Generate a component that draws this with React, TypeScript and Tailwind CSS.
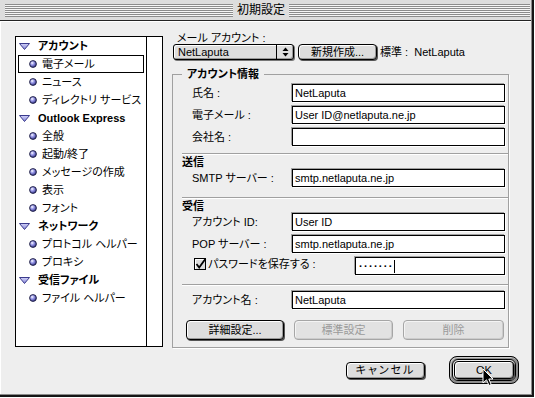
import React from "react";

const btn =
  "flex items-center justify-center rounded-[4px] border border-black bg-[#dddddd] shadow-[inset_1px_1px_0_#ffffff,inset_-1px_-1px_0_#999999,1px_1px_0_#555555]";
const btnDis =
  "flex items-center justify-center rounded-[4px] border border-[#a6a6a6] bg-[#e2e2e2] text-[#9a9a9a] shadow-[inset_1px_1px_0_#f4f4f4,inset_-1px_-1px_0_#cccccc]";
const input =
  "h-[18px] flex items-center border border-black bg-white pl-[2px] shadow-[-1px_-1px_0_#a0a0a0,1px_1px_0_#ffffff] whitespace-nowrap overflow-hidden";
const sep = "ml-[9px] h-[2px] border-t border-b border-t-[#a0a0a0] border-b-white";

function Tri() {
  return (
    <svg width="11" height="7" viewBox="0 0 11 7">
      <defs>
        <linearGradient id="tg" x1="0" y1="0" x2="0" y2="1">
          <stop offset="0" stopColor="#d4d4fa" />
          <stop offset="1" stopColor="#8484d4" />
        </linearGradient>
      </defs>
      <polygon points="0.5,0.5 10.5,0.5 5.5,6.5" fill="url(#tg)" stroke="#3a3a8c" strokeWidth="1" strokeLinejoin="round" />
    </svg>
  );
}

function Dot() {
  return (
    <svg width="8" height="8" viewBox="0 0 8 8">
      <defs>
        <radialGradient id="dg" cx="0.38" cy="0.35" r="0.7">
          <stop offset="0" stopColor="#ffffff" />
          <stop offset="0.35" stopColor="#a4a4ee" />
          <stop offset="1" stopColor="#2a2a86" />
        </radialGradient>
      </defs>
      <circle cx="4" cy="4" r="3.4" fill="url(#dg)" stroke="#1a1a3c" strokeWidth="0.9" />
    </svg>
  );
}

const items: { t: string; h?: boolean; sel?: boolean }[] = [
  { h: true, t: "アカウント" },
  { t: "電子メール", sel: true },
  { t: "ニュース" },
  { t: "ディレクトリ サービス" },
  { h: true, t: "Outlook Express" },
  { t: "全般" },
  { t: "起動/終了" },
  { t: "メッセージの作成" },
  { t: "表示" },
  { t: "フォント" },
  { h: true, t: "ネットワーク" },
  { t: "プロトコル ヘルパー" },
  { t: "プロキシ" },
  { h: true, t: "受信ファイル" },
  { t: "ファイル ヘルパー" },
];

function Stripes({ className }: { className: string }) {
  return (
    <div
      className={
        "h-[13px] bg-[image:repeating-linear-gradient(180deg,#8c8c8c_0px,#8c8c8c_1px,#f6f6f6_1px,#f6f6f6_2px)] " +
        className
      }
    />
  );
}

export default function App() {
  return (
    <div className="w-[535px] h-[398px] bg-white pr-[1px] pb-[1px] flex font-['Liberation_Sans','Noto_Sans_CJK_JP',sans-serif] text-[11px] text-black [font-feature-settings:'palt']">
      <div className="flex-1 flex border-r-2 border-b-2 border-[#151515]">
        <div className="flex-1 flex flex-col border-r border-b border-[#8a8a8a]">
          {/* title bar */}
          <div className="h-[21px] flex items-start pt-[4px] pl-[5px] pr-[1px] bg-[#dddddd] border-b border-[#222222]">
            <Stripes className="w-[228px]" />
            <div className="px-[4px] h-[13px] flex items-center text-[12px] leading-[13px]">初期設定</div>
            <Stripes className="flex-1" />
          </div>

          {/* content */}
          <div className="flex-1 flex items-start pl-[15px] pt-[11px] bg-[#eeeeee] shadow-[inset_1px_1px_0_#ffffff]">
            {/* list */}
            <div className="mt-[4px] w-[148px] h-[311px] border border-black bg-white flex">
              <div className="w-[130px] flex flex-col">
                {items.map((it, i) =>
                  it.h ? (
                    <div key={i} className="h-[18px] flex items-center pl-[3px] whitespace-nowrap">
                      <Tri />
                      <span className="ml-[8px] font-bold">{it.t}</span>
                    </div>
                  ) : (
                    <div
                      key={i}
                      className={
                        "h-[18px] mx-[2px] flex items-center pl-[10px] border whitespace-nowrap " +
                        (it.sel ? "border-black" : "border-transparent")
                      }
                    >
                      <Dot />
                      <span className="ml-[5px]">{it.t}</span>
                    </div>
                  )
                )}
              </div>
              <div className="flex-1 border-l border-black" />
            </div>

            {/* right column */}
            <div className="ml-[9px] w-[348px] flex flex-col">
              <div className="h-[12px] leading-[12px] pl-[5px] whitespace-nowrap">メール アカウント :</div>
              <div className="h-[16px] flex items-center">
                <div className="ml-[1px] w-[121px] h-[16px] flex items-stretch rounded-[3px] border border-black bg-[#dddddd] shadow-[inset_1px_1px_0_#ffffff,inset_-1px_-1px_0_#999999,1px_1px_0_#777777]">
                  <div className="flex-1 flex items-center pl-[4px]">NetLaputa</div>
                  <div className="w-[17px] border-l border-black flex items-center justify-center">
                    <svg width="7" height="10" viewBox="0 0 7 10">
                      <polygon points="3.5,0.5 6.5,4 0.5,4" fill="#000" />
                      <polygon points="0.5,6 6.5,6 3.5,9.5" fill="#000" />
                    </svg>
                  </div>
                </div>
                <div className={btn + " ml-[4px] w-[79px] h-[16px]"}>新規作成...</div>
                <div className="ml-[3px] whitespace-nowrap">
                  標準 :&nbsp;&nbsp;NetLaputa
                </div>
              </div>

              <fieldset className="mt-[7px] w-[337px] border border-[#a0a0a0] pt-[3px] pb-[7px] px-0 shadow-[1px_1px_0_#ffffff]">
                <legend className="ml-[9px] px-[5px] font-bold leading-[14px]">アカウント情報</legend>

                <div className="flex items-center h-[18px]">
                  <div className="w-[119px] pl-[19px]">氏名 :</div>
                  <div className={input + " w-[213px]"}>NetLaputa</div>
                </div>
                <div className="mt-[4px] flex items-center h-[18px]">
                  <div className="w-[119px] pl-[19px]">電子メール :</div>
                  <div className={input + " w-[213px]"}>User ID@netlaputa.ne.jp</div>
                </div>
                <div className="mt-[4px] flex items-center h-[18px]">
                  <div className="w-[119px] pl-[19px]">会社名 :</div>
                  <div className={input + " w-[213px]"}></div>
                </div>

                <div className={sep + " mt-[7px]"} />
                <div className="h-[14px] leading-[14px] pl-[9px] font-bold">送信</div>
                <div className="flex items-center h-[18px]">
                  <div className="w-[119px] pl-[19px] whitespace-nowrap">SMTP サーバー :</div>
                  <div className={input + " w-[213px]"}>smtp.netlaputa.ne.jp</div>
                </div>

                <div className={sep + " mt-[10px]"} />
                <div className="h-[14px] leading-[14px] pl-[9px] font-bold">受信</div>
                <div className="flex items-center h-[18px]">
                  <div className="w-[119px] pl-[19px] whitespace-nowrap">アカウント ID:</div>
                  <div className={input + " w-[213px]"}>User ID</div>
                </div>
                <div className="mt-[4px] flex items-center h-[18px]">
                  <div className="w-[119px] pl-[19px] whitespace-nowrap">POP サーバー :</div>
                  <div className={input + " w-[213px]"}>smtp.netlaputa.ne.jp</div>
                </div>
                <div className="mt-[4px] flex items-center h-[18px]">
                  <div className="w-[182px] pl-[21px] flex items-center mb-[4px] whitespace-nowrap">
                    <svg width="13" height="13" viewBox="0 0 13 13">
                      <rect x="0.5" y="0.5" width="11" height="11" fill="#dcdcdc" stroke="#000" />
                      <path d="M1.5 11 V1.5 H11" fill="none" stroke="#ffffff" />
                      <path d="M2.5 6 L5.2 9.6 L11.5 0.8" fill="none" stroke="#000" strokeWidth="1.8" />
                    </svg>
                    <span className="ml-[1px]">パスワードを保存する :</span>
                  </div>
                  <div className={input + " w-[150px] pl-[3px]"}>
                    <span className="tracking-[1.3px] font-bold">·······</span>
                    <span className="w-px h-[13px] bg-black" />
                  </div>
                </div>

                <div className={sep + " mt-[9px]"} />
                <div className="mt-[5px] flex items-center h-[18px]">
                  <div className="w-[119px] pl-[19px] whitespace-nowrap">アカウント名 :</div>
                  <div className={input + " w-[213px]"}>NetLaputa</div>
                </div>

                <div className="mt-[11px] flex items-center pl-[13px] gap-[10px]">
                  <div className={btn + " w-[98px] h-[20px]"}>詳細設定...</div>
                  <div className={btnDis + " w-[99px] h-[20px]"}>標準設定</div>
                  <div className={btnDis + " w-[101px] h-[20px]"}>削除</div>
                </div>
              </fieldset>

              <div className="mt-[8px] flex items-center justify-end pr-[1px]">
                <div className={btn + " w-[79px] h-[17px] tracking-[2px]"}>キャンセル</div>
                <div className="relative ml-[24px] w-[70px] h-[28px] rounded-[8px] border border-black bg-[#8c8c8c] p-[2px] shadow-[inset_1px_1px_0_#cccccc]">
                  <div className="w-full h-full rounded-[6px] border border-black bg-[#eeeeee] p-[1px]">
                    <div className={btn + " w-full h-full"}>OK</div>
                  </div>
                  <svg className="absolute left-[32px] top-[11px]" width="12" height="19" viewBox="0 0 12 19">
                    <path
                      d="M1 1 L1 15 L4.5 11.8 L7 17.5 L9.2 16.5 L6.8 11 L11 11 Z"
                      fill="#000"
                      stroke="#fff"
                      strokeWidth="1"
                    />
                  </svg>
                </div>
              </div>
            </div>
          </div>
        </div>
      </div>
    </div>
  );
}
